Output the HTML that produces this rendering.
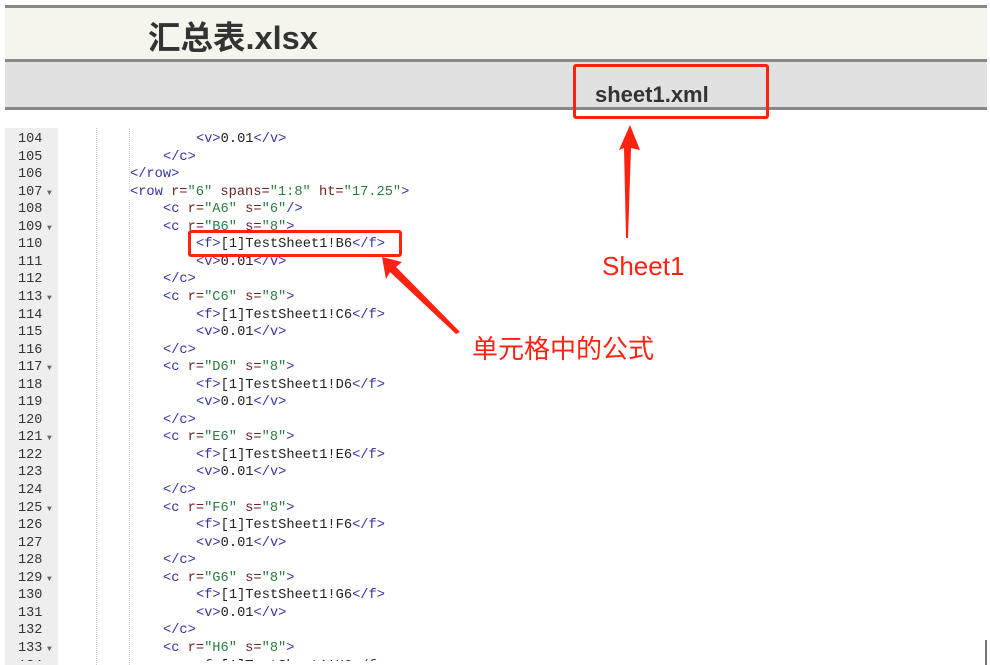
<!DOCTYPE html>
<html><head><meta charset="utf-8"><style>
*{margin:0;padding:0;box-sizing:border-box}
body{width:990px;height:665px;background:#fff;position:relative;overflow:hidden;font-family:"Liberation Sans","Noto Sans CJK SC",sans-serif}
.abs{position:absolute}
.code{position:absolute;left:0;top:131px;width:990px;height:530px;overflow:hidden;font-family:"Liberation Mono",monospace;font-size:13.7px}
.ln{position:absolute;height:17.55px;line-height:17.55px;white-space:pre;color:#222}
.num{position:absolute;left:18px;width:40px;font-family:"Liberation Mono",monospace;font-size:13.5px;color:#333;line-height:17.55px}
.t{color:#3434a8}.a{color:#6a2222}.v{color:#2a7d3e}
.fold{position:absolute;left:47px;font-size:8px;color:#666}
.guide{position:absolute;border-left:1px dotted #ccc}
</style></head><body>
<div class="abs" style="left:5px;top:5px;width:982px;height:3px;background:#888"></div>
<div class="abs" style="left:5px;top:8px;width:982px;height:51px;background:#f5f5ee"></div>
<div class="abs" style="left:5px;top:59px;width:982px;height:3px;background:#888"></div>
<div class="abs" style="left:5px;top:62px;width:982px;height:45px;background:#e1e1e1"></div>
<div class="abs" style="left:5px;top:107px;width:982px;height:3px;background:#888"></div>
<div class="abs" style="left:148px;top:18px;font-size:32.5px;font-weight:bold;color:#333;line-height:40px;font-family:'Liberation Sans','Noto Sans CJK SC',sans-serif">汇总表.xlsx</div>
<div class="abs" style="left:595px;top:80px;font-size:22px;font-weight:bold;color:#333;line-height:30px">sheet1.xml</div>
<div class="abs" style="left:5px;top:128px;width:53px;height:537px;background:#eee"></div>
<div class="abs" style="left:985px;top:640px;width:2px;height:25px;background:#777"></div>
<div class="guide" style="left:96px;top:128px;height:537px"></div>
<div class="guide" style="left:129px;top:128px;height:64px"></div>
<div class="guide" style="left:129px;top:200px;height:465px"></div>
<div class="code" id="c"></div>
<script>
var L=[[104,3,'<span class=t>&lt;v&gt;</span>0.01<span class=t>&lt;/v&gt;</span>'],[105,2,'<span class=t>&lt;/c&gt;</span>'],[106,1,'<span class=t>&lt;/row&gt;</span>'],
[107,1,'<span class=t>&lt;row</span> <span class=a>r=</span><span class=v>"6"</span> <span class=a>spans=</span><span class=v>"1:8"</span> <span class=a>ht=</span><span class=v>"17.25"</span><span class=t>&gt;</span>',1],
[108,2,'<span class=t>&lt;c</span> <span class=a>r=</span><span class=v>"A6"</span> <span class=a>s=</span><span class=v>"6"</span><span class=t>/&gt;</span>']];
var n=109;"BCDEFGH".split("").forEach(function(ch){
L.push([n++,2,'<span class=t>&lt;c</span> <span class=a>r=</span><span class=v>"'+ch+'6"</span> <span class=a>s=</span><span class=v>"8"</span><span class=t>&gt;</span>',1]);
if(n>134)return;
L.push([n++,3,'<span class=t>&lt;f&gt;</span>[1]TestSheet1!'+ch+'6<span class=t>&lt;/f&gt;</span>']);
L.push([n++,3,'<span class=t>&lt;v&gt;</span>0.01<span class=t>&lt;/v&gt;</span>']);
L.push([n++,2,'<span class=t>&lt;/c&gt;</span>']);});
var h='';L.forEach(function(r,i){var y=i*17.55;if(r[0]>134)return;
h+='<div class=num style="top:'+y+'px">'+r[0]+'</div>';
if(r[3])h+='<div class=fold style="top:'+(y+5)+'px">&#9660;</div>';
h+='<div class=ln style="top:'+y+'px;left:'+(97+33*r[1])+'px">'+r[2]+'</div>';});
document.getElementById('c').innerHTML=h;
</script>
<div class="abs" style="left:573px;top:64px;width:196px;height:55px;border:3px solid #f21;border-radius:3px"></div>
<div class="abs" style="left:188px;top:230px;width:214px;height:27px;border:3px solid #f21;border-radius:3px"></div>
<svg class="abs" style="left:0;top:0" width="990" height="665">
<polygon points="630,125 640,150 631,148 628,238 626,238 624,148 619,150" fill="#f21"/>
<polygon points="382,257 402,262 396,267 460,332 456,334 390,272 386,279" fill="#f21"/>
</svg>
<div class="abs" style="left:602px;top:250px;font-size:26px;color:#f21;line-height:32px">Sheet1</div>
<div class="abs" style="left:472px;top:332px;font-size:26px;color:#f21;line-height:32px;font-family:'Noto Sans CJK SC',sans-serif">单元格中的公式</div>
</body></html>
